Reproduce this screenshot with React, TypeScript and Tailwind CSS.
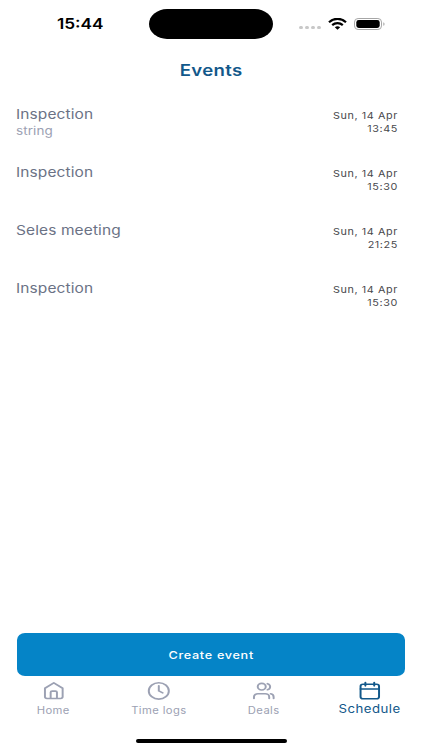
import type { ReactNode } from "react";
import clsx from "clsx";

type EventItem = {
  title: string;
  note?: string;
  date: string;
  time: string;
};

const events: EventItem[] = [
  { title: "Inspection", note: "string", date: "Sun, 14 Apr", time: "13:45" },
  { title: "Inspection", date: "Sun, 14 Apr", time: "15:30" },
  { title: "Seles meeting", date: "Sun, 14 Apr", time: "21:25" },
  { title: "Inspection", date: "Sun, 14 Apr", time: "15:30" },
];

function StatusBar() {
  return (
    <div className="flex h-12 shrink-0 items-center">
      <div className="flex w-[149px] justify-center pl-[11px]">
        <span className="scale-x-[1.15] text-[15px] leading-5 font-semibold text-black">
          15:44
        </span>
      </div>
      <div className="h-[30px] w-[124px] rounded-[18px/15px] bg-black" />
      <div className="flex flex-1 items-center pl-[26px]">
        <div className="mt-[7px] flex gap-[2px]">
          {[0, 1, 2, 3].map((dot) => (
            <span key={dot} className="h-[3px] w-1 rounded-full bg-[#c8c8c8]" />
          ))}
        </div>
        <svg
          className="ml-[7px] h-3 w-[19px]"
          viewBox="0 0 19 12"
          preserveAspectRatio="none"
          fill="none"
          stroke="#000"
          strokeWidth="2.2"
        >
          <path d="M1 4.2C5.8-.3 13.2-.3 18 4.2" />
          <path d="M4.2 7.1c3-2.7 7.6-2.7 10.6 0" />
          <path d="M6.8 9.3c1.6-1.3 3.8-1.3 5.4 0L9.5 11.7z" fill="#000" stroke="none" />
        </svg>
        <svg className="ml-[7px] h-3 w-[32px]" viewBox="0 0 32 12" fill="none">
          <rect x=".5" y=".5" width="27" height="11" rx="3.6" stroke="#a6a6a6" />
          <rect x="2.3" y="2" width="23.4" height="8" rx="2.4" fill="#000" />
          <path d="M29.3 4.2c1.7.5 1.7 3.1 0 3.6z" fill="#a6a6a6" />
        </svg>
      </div>
    </div>
  );
}

function EventRow({ title, note, date, time }: EventItem) {
  return (
    <li className="flex h-[57.9px] justify-between pr-6 pl-4">
      <div className="flex origin-left scale-x-[1.19] flex-col items-start">
        <span className="text-[13px] leading-[18px] tracking-[0.1px] text-[#6b7285]">
          {title}
        </span>
        {note && (
          <span className="text-[11.3px] leading-[16px] tracking-[0.1px] text-[#9ca1b3]">
            {note}
          </span>
        )}
      </div>
      <div className="flex origin-right scale-x-[1.14] flex-col items-end pt-1 text-[9.5px] leading-[13px] tracking-[0.5px] text-[#48484c]">
        <span>{date}</span>
        <span>{time}</span>
      </div>
    </li>
  );
}

function TabIcon({ children }: { children: ReactNode }) {
  return (
    <svg
      className="h-[19.3px] w-[23.6px]"
      viewBox="0 0 24 24"
      preserveAspectRatio="none"
      fill="none"
      stroke="currentColor"
      strokeWidth="2"
      strokeLinecap="round"
      strokeLinejoin="round"
    >
      {children}
    </svg>
  );
}

const tabs = [
  {
    label: "Home",
    icon: (
      <>
        <path d="M3 9 12 2.200l9 6.800V19.700a2 2 0 0 1-2 2H5a2 2 0 0 1-2-2z" />
        <path d="M8.800 21.500v-7.400a1.500 1.500 0 0 1 1.500-1.500h3.400a1.500 1.500 0 0 1 1.500 1.500v7.400" />
      </>
    ),
  },
  {
    label: "Time logs",
    icon: (
      <>
        <circle cx="12" cy="12.300" r="10.200" />
        <path d="M12 6v6.300l4 2.400" />
      </>
    ),
  },
  {
    label: "Deals",
    icon: (
      <>
        <path d="M2 21.800v-2a4 4 0 0 1 4-4h7.500a4 4 0 0 1 4 4v2" />
        <circle cx="9.900" cy="7.100" r="4.100" />
        <path d="M22 21.800v-2a4 4 0 0 0-3-3.870" />
        <path d="M15.700 3.300a4 4 0 0 1 0 7.600" />
      </>
    ),
  },
  {
    label: "Schedule",
    active: true,
    icon: (
      <>
        <rect x="2.600" y="4.100" width="18.800" height="18" rx="2.500" />
        <path d="M7.500 1.800v4.200M16.500 1.800v4.200M2.600 9.900h18.800" />
      </>
    ),
  },
];

function TabBar() {
  return (
    <nav className="grid h-[63px] shrink-0 grid-cols-4 pt-[5px] pl-px">
      {tabs.map(({ label, icon, active }) => (
        <div
          key={label}
          className={clsx(
            "flex flex-col items-center",
            active ? "text-[#12588a]" : "text-[#9ca1b3]"
          )}
        >
          <TabIcon>{icon}</TabIcon>
          <span
            className={clsx(
              "whitespace-nowrap",
              active
                ? "scale-x-[1.17] text-[11.3px] leading-[18px] tracking-[0.4px]"
                : "scale-x-[1.16] text-[9.7px] leading-[21px] tracking-[0.35px]"
            )}
          >
            {label}
          </span>
        </div>
      ))}
    </nav>
  );
}

export default function App() {
  return (
    <div className="flex h-[750px] w-[422px] flex-col overflow-hidden bg-white font-['Inter',sans-serif]">
      <StatusBar />
      <h1 className="flex h-[57px] shrink-0 justify-center pt-[10px] text-[16px] leading-6 font-semibold text-[#12588a]">
        <span className="h-6 scale-x-[1.16] tracking-[0.3px]">Events</span>
      </h1>
      <ul className="flex-1">
        {events.map((event, i) => (
          <EventRow key={i} {...event} />
        ))}
      </ul>
      <button className="mx-[17px] h-[43px] shrink-0 rounded-[8px/7px] bg-[#0584c7] pt-[2px] text-[11px] font-medium text-white">
        <span className="inline-block scale-x-[1.15] tracking-[0.6px]">Create event</span>
      </button>
      <TabBar />
      <div className="mx-auto mb-[7px] h-1 w-[151px] shrink-0 rounded-full bg-black" />
    </div>
  );
}
